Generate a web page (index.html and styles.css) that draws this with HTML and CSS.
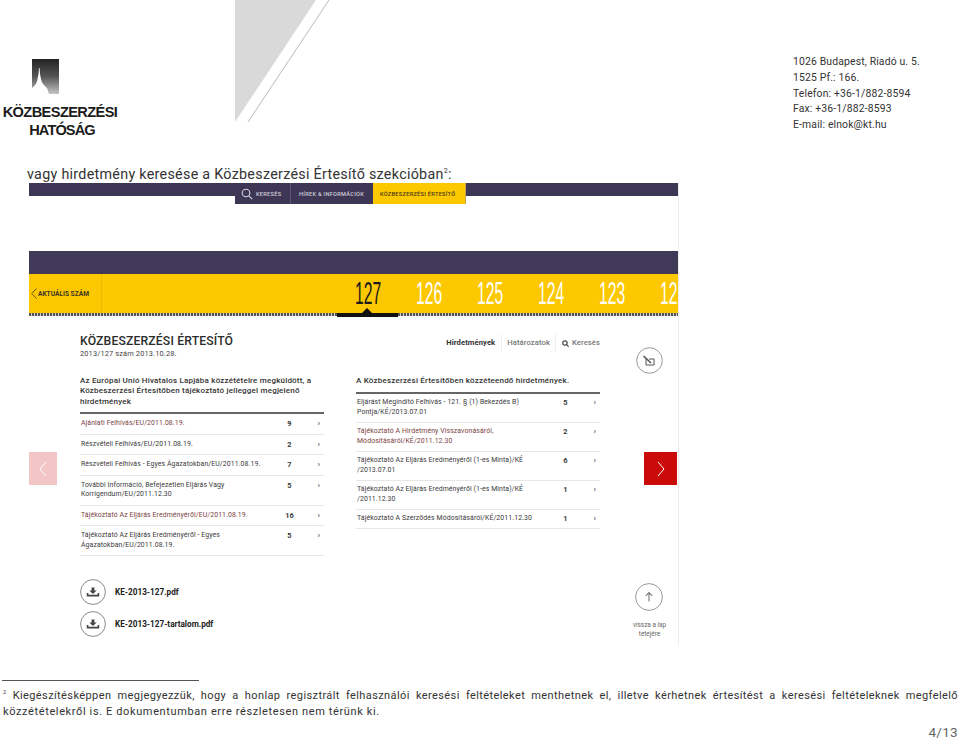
FILE: index.html
```html
<!DOCTYPE html>
<html lang="hu">
  <head>
    <meta charset="UTF-8" />
    <title>Közbeszerzési Hatóság</title>
    <link rel="stylesheet" href="styles.css">
  </head>
  <body>
    <div class="page">
      <header class="page-header">
        <div class="logo">
          <svg class="logo-mark" width="27" height="35" viewBox="0 0 27 35">
            <defs>
              <linearGradient id="logoFade" x1="0" y1="0" x2="0" y2="1">
                <stop offset="0" stop-color="#222" />
                <stop offset="0.5" stop-color="#555" />
                <stop offset="1" stop-color="#c4c4c4" />
              </linearGradient>
            </defs>
            <rect width="27" height="35" fill="url(#logoFade)" />
            <path d="M0 29 C3 27 5 24 5.5 20 L6.5 15 L7 9 L7.6 9 L8 15 L9 20 C10 25 13 27 15 29 L17 35 L0 35 Z" fill="#fff" />
          </svg>
          <div class="logo-name">KÖZBESZERZÉSI</div>
          <div class="logo-name logo-name-short">HATÓSÁG</div>
        </div>
        <svg class="corner-mark" width="95" height="123" viewBox="0 0 95 123">
          <polygon points="0,0 81,0 0,122" fill="#d9d9d9" />
          <line x1="94" y1="0" x2="13" y2="122" stroke="#bbb" stroke-width="1" />
        </svg>
        <address class="contact">
          1026 Budapest, Riadó u. 5.<br />
          1525 Pf.: 166.<br />
          Telefon: +36-1/882-8594<br />
          Fax: +36-1/882-8593<br />
          E-mail: elnok@kt.hu
        </address>
      </header>

      <p class="intro">vagy hirdetmény keresése a Közbeszerzési Értesítő szekcióban<sup>2</sup>:</p>

      <div class="shot">
        <nav class="topnav">
          <a class="tab">
            <svg width="12" height="12" viewBox="0 0 12 12" fill="none" stroke="#d8d6e0" stroke-width="1.1">
              <circle cx="5" cy="5" r="3.8" />
              <path d="M7.8 7.8 L11.2 11.2" />
            </svg>
            KERESÉS
          </a>
          <a class="tab tab-news">HÍREK &amp; INFORMÁCIÓK</a>
          <a class="tab tab-active">KÖZBESZERZÉSI ÉRTESÍTŐ</a>
        </nav>

        <div class="band"></div>
        <div class="issues">
          <a class="current-link">
            <svg width="6" height="11" viewBox="0 0 6 11" fill="none" stroke="#5a4a10" stroke-width="0.9"><path d="M5.5 0.5 L0.8 5.5 L5.5 10.5" /></svg>
            AKTUÁLIS SZÁM
          </a>
          <div class="issue-list">
            <span class="issue issue-current">127</span>
            <span class="issue">126</span>
            <span class="issue">125</span>
            <span class="issue">124</span>
            <span class="issue">123</span>
            <span class="issue">122</span>
          </div>
        </div>
        <div class="dots"><span class="dots-active"></span></div>

        <div class="content">
          <section class="col">
            <h1 class="title">KÖZBESZERZÉSI ÉRTESÍTŐ</h1>
            <div class="subtitle">2013/127 szám 2013.10.28.</div>
            <h2 class="col-head col-head-left">Az Európai Unió Hivatalos Lapjába közzétételre megküldött, a Közbeszerzési Értesítőben tájékoztató jelleggel megjelenő hirdetmények</h2>
            <ul class="rows">
              <li class="row visited"><span>Ajánlati Felhívás/EU/2011.08.19.</span><b>9</b><i>›</i></li>
              <li class="row"><span>Részvételi Felhívás/EU/2011.08.19.</span><b>2</b><i>›</i></li>
              <li class="row"><span>Részvételi Felhívás - Egyes Ágazatokban/EU/2011.08.19.</span><b>7</b><i>›</i></li>
              <li class="row"><span>További Információ, Befejezetlen Eljárás Vagy Korrigendum/EU/2011.12.30</span><b>5</b><i>›</i></li>
              <li class="row visited"><span>Tájékoztató Az Eljárás Eredményéről/EU/2011.08.19.</span><b>16</b><i>›</i></li>
              <li class="row"><span>Tájékoztató Az Eljárás Eredményéről - Egyes Ágazatokban/EU/2011.08.19.</span><b>5</b><i>›</i></li>
            </ul>
            <div class="downloads">
              <a class="download">
                <svg class="ring" width="26" height="26" viewBox="0 0 26 26" fill="none">
                  <circle cx="13" cy="13" r="12.4" stroke="#8a8a8a" />
                  <path d="M11.6 8.5 H14.4 V11.5 H16.6 L13 15 L9.4 11.5 H11.6 Z" fill="#444" />
                  <path d="M7.6 14 V16.6 H18.4 V14" stroke="#444" stroke-width="1.6" />
                </svg>
                KE-2013-127.pdf
              </a>
              <a class="download">
                <svg class="ring" width="26" height="26" viewBox="0 0 26 26" fill="none">
                  <circle cx="13" cy="13" r="12.4" stroke="#8a8a8a" />
                  <path d="M11.6 8.5 H14.4 V11.5 H16.6 L13 15 L9.4 11.5 H11.6 Z" fill="#444" />
                  <path d="M7.6 14 V16.6 H18.4 V14" stroke="#444" stroke-width="1.6" />
                </svg>
                KE-2013-127-tartalom.pdf
              </a>
            </div>
          </section>

          <section class="col">
            <div class="subnav">
              <a class="subnav-item subnav-active">Hirdetmények</a>
              <a class="subnav-item">Határozatok</a>
              <a class="subnav-item">
                <svg width="7" height="7" viewBox="0 0 7 7" fill="none" stroke="#444" stroke-width="1.2">
                  <circle cx="3" cy="3" r="2.2" />
                  <path d="M4.6 4.6 L6.6 6.6" />
                </svg>
                Keresés
              </a>
            </div>
            <h2 class="col-head">A Közbeszerzési Értesítőben közzéteendő hirdetmények.</h2>
            <ul class="rows rows-compact">
              <li class="row"><span>Eljárást Megindító Felhívás - 121. § (1) Bekezdés B) Pontja/KÉ/2013.07.01</span><b>5</b><i>›</i></li>
              <li class="row visited"><span>Tájékoztató A Hirdetmény Visszavonásáról, Módosításáról/KÉ/2011.12.30</span><b>2</b><i>›</i></li>
              <li class="row"><span>Tájékoztató Az Eljárás Eredményéről (1-es Minta)/KÉ /2013.07.01</span><b>6</b><i>›</i></li>
              <li class="row"><span>Tájékoztató Az Eljárás Eredményéről (1-es Minta)/KÉ /2011.12.30</span><b>1</b><i>›</i></li>
              <li class="row"><span>Tájékoztató A Szerződés Módosításáról/KÉ/2011.12.30</span><b>1</b><i>›</i></li>
            </ul>
          </section>

          <aside class="side">
            <svg class="ring" width="27" height="27" viewBox="0 0 27 27" fill="none">
              <circle cx="13.5" cy="13.5" r="12.8" stroke="#999" />
              <path d="M10 11 V18 H18 V12 H13" stroke="#555" stroke-width="1" />
              <path d="M7.5 9 L15 16" stroke="#555" stroke-width="1.6" />
            </svg>
            <a class="to-top">
              <svg class="ring" width="28" height="28" viewBox="0 0 28 28" fill="none">
                <circle cx="14" cy="14" r="13.4" stroke="#999" />
                <path d="M14 18.5 V9.5 M10.8 12.8 L14 9.5 L17.2 12.8" stroke="#777" stroke-width="1.1" />
              </svg>
              <span class="to-top-label">vissza a lap<br />tetejére</span>
            </a>
          </aside>
        </div>

        <a class="pager pager-prev">
          <svg width="8" height="16" viewBox="0 0 8 16" fill="none" stroke="#fff" stroke-width="1"><path d="M7 1 L1 8 L7 15" /></svg>
        </a>
        <a class="pager pager-next">
          <svg width="8" height="16" viewBox="0 0 8 16" fill="none" stroke="#fff" stroke-width="1"><path d="M1 1 L7 8 L1 15" /></svg>
        </a>
      </div>

      <footer class="notes">
        <div class="note-rule"></div>
        <p class="note note-first"><sup>2</sup> Kiegészítésképpen megjegyezzük, hogy a honlap regisztrált felhasználói keresési feltételeket menthetnek el, illetve kérhetnek értesítést a keresési feltételeknek megfelelő</p>
        <p class="note note-last">közzétételekről is. E dokumentumban erre részletesen nem térünk ki.</p>
        <div class="page-num">4/13</div>
      </footer>
    </div>
  </body>
</html>
```

FILE: styles.css
```css
html,
body {
  margin: 0;
  background: #fff;
}
a {
  color: inherit;
  text-decoration: none;
}
ul {
  list-style: none;
  margin: 0;
  padding: 0;
}
.page {
  width: 960px;
  height: 740px;
  overflow: hidden;
  font-family: Roboto, "Liberation Sans", sans-serif;
  color: #2b2b2b;
}

/* page header */
.page-header {
  display: flex;
  height: 165px;
}
.logo {
  width: 118px;
  margin-left: 1px;
  padding-top: 59px;
  text-align: center;
}
.logo-mark {
  display: block;
  margin: 0 0 9px 31px;
}
.logo-name {
  font-family: "Liberation Sans", sans-serif;
  font-weight: 700;
  font-size: 14.6px;
  line-height: 18px;
  letter-spacing: -0.6px;
  color: #1c1c1c;
}
.logo-name-short {
  padding-left: 4px;
  letter-spacing: -0.9px;
}
.corner-mark {
  display: block;
  margin-left: 116px;
}
.contact {
  margin-left: auto;
  width: 167px;
  padding-top: 54px;
  font-style: normal;
  font-size: 10.4px;
  line-height: 15.8px;
  letter-spacing: 0.15px;
  color: #333;
}
.intro {
  margin: 0 0 0 27px;
  font-size: 14.3px;
  line-height: 18px;
  letter-spacing: 0.29px;
  color: #333;
}
.intro sup,
.note sup {
  font-size: 50%;
  line-height: 0;
}

/* embedded site screenshot */
.shot {
  position: relative;
  width: 649px;
  height: 462px;
  margin-left: 29px;
  border-right: 1px solid #ececec;
  overflow: hidden;
}
.topnav {
  display: flex;
  height: 21px;
  padding-left: 206px;
  background: linear-gradient(#3d3755 13px, transparent 13px);
  font-size: 5.6px;
  font-weight: 500;
  letter-spacing: 0.3px;
}
.tab {
  display: flex;
  align-items: center;
  gap: 3px;
  width: 55px;
  box-sizing: border-box;
  padding-left: 6px;
  background: #3d3755;
  color: #cfccd8;
}
.tab-news {
  width: 83px;
  padding-left: 8px;
  border-left: 1px solid #5c5672;
}
.tab-active {
  width: 93px;
  padding-left: 7px;
  background: #fdc800;
  color: #4a3a10;
  border-right: 1px solid #c9a64a;
}
.band {
  height: 23px;
  margin-top: 47px;
  background: #403a58;
}
.issues {
  display: flex;
  height: 39px;
  background: #fdc800;
}
.current-link {
  display: flex;
  flex: none;
  align-items: center;
  gap: 1px;
  width: 70px;
  padding-left: 2px;
  border-right: 1px solid #eeb900;
  white-space: nowrap;
  font-size: 6.6px;
  font-weight: 700;
  color: #3a3320;
}
.issue-list {
  display: flex;
  flex: none;
  align-items: center;
  margin-left: 253px;
}
.issue {
  display: block;
  width: 61px;
  flex: none;
  font-family: "Liberation Sans", sans-serif;
  font-size: 32px;
  line-height: 43px;
  color: #fff;
  transform: scaleX(0.49);
  transform-origin: left center;
}
.issue-current {
  color: #1a1a1a;
}
.dots {
  position: relative;
  height: 3px;
  background: repeating-linear-gradient(90deg, #555 0 2px, #ccc 2px 3px);
}
.dots-active {
  position: absolute;
  left: 308px;
  top: 0;
  width: 61px;
  height: 4px;
  background: #111;
}
.dots-active::before {
  content: "";
  position: absolute;
  left: 25px;
  top: -5px;
  border: 5px solid transparent;
  border-top: 0;
  border-bottom-color: #111;
}

/* two lists */
.content {
  display: flex;
  padding: 18px 0 0 51px;
}
.col {
  width: 244px;
  flex: none;
}
.col + .col {
  margin-left: 32px;
}
.title {
  margin: 0;
  font-size: 12.2px;
  font-weight: 500;
  line-height: 14px;
  letter-spacing: 0.15px;
  color: #2c2c2c;
}
.subtitle {
  margin-top: 1px;
  font-size: 7.4px;
  line-height: 10px;
  letter-spacing: 0.15px;
  color: #444;
}
.col-head {
  margin: 0;
  padding-bottom: 5px;
  border-bottom: 2px solid #666;
  font-size: 8px;
  font-weight: 500;
  line-height: 10.5px;
  letter-spacing: 0.2px;
  color: #333;
}
.col-head-left {
  margin-top: 16.5px;
}
.row {
  display: grid;
  grid-template-columns: 196px 24px 1fr;
  padding: 5px 0 5px 1px;
  border-bottom: 1px solid #e6e6e6;
  font-size: 6.9px;
  line-height: 9.5px;
  letter-spacing: 0.1px;
  color: #3a3a3a;
}
.rows-compact .row {
  padding-top: 4.5px;
  padding-bottom: 4.5px;
}
.row b {
  font-size: 7.4px;
  font-weight: 700;
  text-align: center;
  margin-left: 1px;
}
.row i {
  font-style: normal;
  font-weight: 700;
  text-align: right;
  padding-right: 4px;
}
.visited {
  color: #7c3f3f;
}
.visited b,
.visited i {
  color: #3a3a3a;
}
.downloads {
  display: flex;
  flex-direction: column;
  gap: 6px;
  margin-top: 23px;
}
.download {
  display: flex;
  align-items: center;
  gap: 9px;
  font-size: 8.2px;
  font-weight: 700;
  color: #222;
}
.ring {
  display: block;
  flex: none;
}
.subnav {
  display: flex;
  justify-content: flex-end;
  height: 18px;
  margin-bottom: 24px;
  font-size: 7.6px;
  font-weight: 500;
  line-height: 20px;
  letter-spacing: 0.1px;
  color: #777;
}
.subnav-item {
  display: flex;
  align-items: center;
  gap: 3px;
  padding: 0 5.5px;
  border-right: 1px solid #f0f0f0;
}
.subnav-item:last-child {
  padding-right: 0;
  border-right: 0;
}
.subnav-active {
  font-weight: 700;
  color: #333;
}
.side {
  display: flex;
  flex-direction: column;
  align-items: center;
  width: 58px;
  margin-left: 21px;
  padding-top: 13px;
}
.to-top {
  display: flex;
  flex-direction: column;
  align-items: center;
  margin-top: 209px;
}
.to-top-label {
  margin-top: 10px;
  font-size: 6.4px;
  line-height: 8.5px;
  text-align: center;
  color: #666;
}
.pager {
  position: absolute;
  top: 269px;
  display: flex;
  align-items: center;
  justify-content: center;
  height: 33px;
}
.pager-prev {
  left: 0;
  width: 28px;
  background: #f2c5c7;
}
.pager-next {
  right: 1px;
  width: 33px;
  background: #cb0a0a;
}

/* footnote */
.note-rule {
  width: 197px;
  height: 1px;
  margin: 35px 0 7px 2px;
  background: #555;
}
.note {
  margin: 0 2px 0 3px;
  font-size: 11px;
  line-height: 15.5px;
  color: #333;
}
.note-first {
  letter-spacing: 0.4px;
  text-align: justify;
  text-align-last: justify;
}
.note-last {
  letter-spacing: 0.62px;
}
.page-num {
  margin: 5px 2px 0 0;
  font-size: 13.5px;
  line-height: 16px;
  letter-spacing: 0.3px;
  text-align: right;
  color: #666;
}
```
